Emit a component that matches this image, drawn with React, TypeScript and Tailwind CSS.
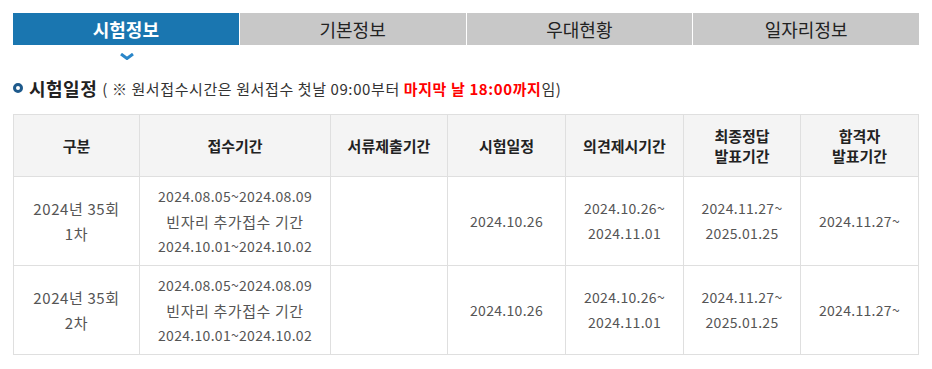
import React from "react";

const font = { fontFamily: '"Noto Sans CJK KR", "Noto Sans", sans-serif' };

const tabs = ["시험정보", "기본정보", "우대현황", "일자리정보"];

interface Row {
  round: string[];
  accept: string[];
  docs: string[];
  exam: string[];
  opinion: string[];
  answer: string[];
  pass: string[];
}

const rows: Row[] = [
  {
    round: ["2024년 35회", "1차"],
    accept: ["2024.08.05~2024.08.09", "빈자리 추가접수 기간", "2024.10.01~2024.10.02"],
    docs: [],
    exam: ["2024.10.26"],
    opinion: ["2024.10.26~", "2024.11.01"],
    answer: ["2024.11.27~", "2025.01.25"],
    pass: ["2024.11.27~"],
  },
  {
    round: ["2024년 35회", "2차"],
    accept: ["2024.08.05~2024.08.09", "빈자리 추가접수 기간", "2024.10.01~2024.10.02"],
    docs: [],
    exam: ["2024.10.26"],
    opinion: ["2024.10.26~", "2024.11.01"],
    answer: ["2024.11.27~", "2025.01.25"],
    pass: ["2024.11.27~"],
  },
];

const headers = [
  { label: ["구분"], w: "w-[126px]" },
  { label: ["접수기간"], w: "w-[191px]" },
  { label: ["서류제출기간"], w: "w-[117px]" },
  { label: ["시험일정"], w: "w-[118px]" },
  { label: ["의견제시기간"], w: "w-[118px]" },
  { label: ["최종정답", "발표기간"], w: "w-[117px]" },
  { label: ["합격자", "발표기간"], w: "w-[118px]" },
];

const hasHangul = (s: string) => /[가-힣]/.test(s);

const Cell: React.FC<{ lines: string[] }> = ({ lines }) => (
  <td className="border border-[#dfdfdf] text-center align-middle leading-[25px] text-[#555]">
    {lines.map((l, i) => (
      <div
        key={i}
        className={hasHangul(l) ? "text-[15px] tracking-[0.6px]" : "text-[14px] tracking-[0.3px]"}
      >
        {l}
      </div>
    ))}
  </td>
);

export default function App() {
  return (
    <div className="w-[932px] h-[369px] bg-white" style={font}>
      <div className="pl-[13px] pr-[13px] pt-[13px]">
        {/* 탭 */}
        <div className="flex gap-[1px] w-[906px]">
          {tabs.map((t, i) => (
            <div
              key={t}
              className={`flex-1 h-[32px] flex items-center justify-center text-[18px] ${
                i === 0 ? "bg-[#1a76b0] text-white font-bold" : "bg-[#c8c8c8] text-[#222]"
              }`}
            >
              {t}
            </div>
          ))}
        </div>
        <div className="w-[228px] flex justify-center pt-[8px]">
          <svg width="14" height="7" viewBox="0 0 14 7">
            <path d="M1 1 L7 5.5 L13 1" stroke="#2a86c9" strokeWidth="3" fill="none" />
          </svg>
        </div>

        {/* 제목 */}
        <div className="flex items-center mt-[18px] h-[20px]">
          <span className="w-[10px] h-[10px] rounded-full border-[3px] border-[#1e5a8c] bg-white mr-[6px]" />
          <span className="text-[18px] font-bold text-[#222] tracking-[0.5px]">시험일정</span>
          <span className="text-[15px] text-[#333] ml-[5px] mt-[2px] tracking-[0.6px]">
            ( ※ 원서접수시간은 원서접수 첫날 09:00부터{" "}
            <span className="text-[#ff0000] font-bold">마지막 날 18:00까지</span>임)
          </span>
        </div>

        {/* 표 */}
        <table className="mt-[16px] border-collapse w-[906px] table-fixed">
          <colgroup>
            {headers.map((h, i) => (
              <col key={i} className={h.w} />
            ))}
          </colgroup>
          <thead>
            <tr className="h-[62px] bg-[#f4f4f4]">
              {headers.map((h, i) => (
                <th
                  key={i}
                  className="border border-[#dfdfdf] text-center align-middle text-[15px] font-bold leading-[20px] text-[#222]"
                >
                  {h.label.map((l, j) => (
                    <div key={j}>{l}</div>
                  ))}
                </th>
              ))}
            </tr>
          </thead>
          <tbody>
            {rows.map((r, i) => (
              <tr key={i} className="h-[89px]">
                <Cell lines={r.round} />
                <Cell lines={r.accept} />
                <Cell lines={r.docs} />
                <Cell lines={r.exam} />
                <Cell lines={r.opinion} />
                <Cell lines={r.answer} />
                <Cell lines={r.pass} />
              </tr>
            ))}
          </tbody>
        </table>
      </div>
    </div>
  );
}
